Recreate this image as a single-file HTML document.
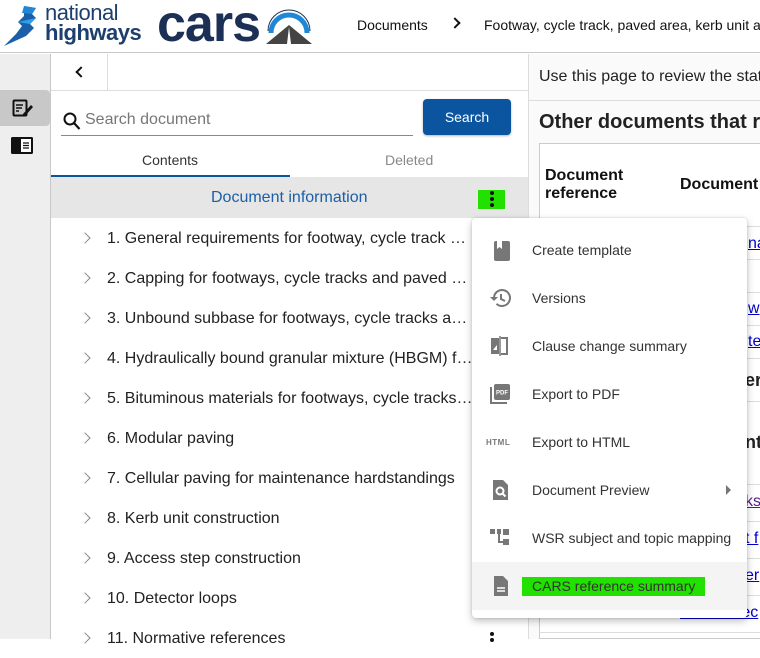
<!DOCTYPE html>
<html><head><style>
*{box-sizing:border-box;margin:0;padding:0}
body{width:760px;height:639px;overflow:hidden;font-family:"Liberation Sans",Arial,sans-serif;background:#fff;position:relative;color:#222}
.abs{position:absolute}
.row{position:absolute;left:51px;width:477px;height:40px;font-size:16px;color:#222;white-space:nowrap;overflow:hidden}
.row .chev{position:absolute;left:30px;top:16px;width:8px;height:8px;border-right:1.5px solid #888;border-top:1.5px solid #888;transform:rotate(45deg)}
.row span{position:absolute;left:56px;top:12px;width:366px;overflow:hidden;text-overflow:ellipsis}
.mi{position:absolute;left:0;width:275px;height:48px;font-size:14px;color:#333}
.mi .t{position:absolute;left:60px;top:16px;white-space:nowrap}
.mi svg{position:absolute;left:16px;top:12px}
a{color:#00c;text-decoration:underline}
</style></head><body>
<div class="abs" style="left:0;top:0;width:760px;height:53px;border-bottom:1px solid #c8c8c8;background:#fff"></div>
<svg class="abs" style="left:2px;top:4px" width="40" height="42" viewBox="0 0 40 42">
<path d="M22 2 L34 4 L30 10 L34 14 L28 20 L32 24 L24 32 L2 42 L14 30 L20 22 L16 18 L22 12 Z" fill="#1a5fa8"/>
<path d="M22 2 L34 4 L30 10 L20 9 Z" fill="#1e88d6"/>
<path d="M16 18 L34 14 L28 20 Z" fill="#2ea0e8"/>
</svg>
<div class="abs" style="left:45px;top:3px;font-size:22px;line-height:20px;color:#1c3f6e;letter-spacing:-0.5px">national</div>
<div class="abs" style="left:45px;top:22px;font-size:22px;line-height:22px;font-weight:bold;color:#1c3f6e;letter-spacing:-0.5px">highways</div>
<div class="abs" style="left:157px;top:-4px;font-size:52px;font-weight:bold;color:#1c3056;letter-spacing:-1px;line-height:56px">cars</div>
<svg class="abs" style="left:266px;top:5px" width="46" height="40" viewBox="0 0 46 40">
<path d="M5 28 A18 18 0 0 1 41 28" fill="none" stroke="#1e88d6" stroke-width="5"/>
<path d="M2 26 A21 21 0 0 1 44 26" fill="none" stroke="#1c3056" stroke-width="1"/>
<path d="M23 20 L46 39 L0 39 Z" fill="#444"/>
<path d="M23 22 L25 39 L21 39 Z" fill="#fff"/>
</svg>
<div class="abs" style="left:357px;top:17px;font-size:14px;color:#111">Documents</div>
<div class="abs" style="left:451px;top:19px;width:8px;height:8px;border-right:2px solid #111;border-top:2px solid #111;transform:rotate(45deg)"></div>
<div class="abs" style="left:484px;top:17px;font-size:14px;color:#111;white-space:nowrap">Footway, cycle track, paved area, kerb unit a</div>
<div class="abs" style="left:0;top:54px;width:51px;height:585px;background:#eee;border-right:1px solid #c8c8c8"></div>
<div class="abs" style="left:0;top:90px;width:50px;height:36px;background:#c8c8c8;border-radius:0 4px 4px 0"></div>
<svg class="abs" style="left:12px;top:99px" width="22" height="18" viewBox="0 0 22 18"><rect x="1.5" y="1.5" width="13" height="15" rx="1" fill="none" stroke="#111" stroke-width="2"/><path d="M4 6h7M4 9h6M4 12h3" stroke="#111" stroke-width="1.6"/><path d="M11 15 L19 6 L21 8 L13 17 L10 17 Z" fill="#111"/></svg>
<svg class="abs" style="left:11px;top:137px" width="22" height="17" viewBox="0 0 22 17"><rect x="0" y="0" width="22" height="17" rx="1.5" fill="#111"/><rect x="10" y="2" width="10" height="13" fill="#fff"/><path d="M12 6h6M12 8.5h6M12 11h6" stroke="#111" stroke-width="1.2"/></svg>
<div class="abs" style="left:51px;top:90px;width:477px;height:1px;background:#ddd"></div>
<div class="abs" style="left:107px;top:54px;width:1px;height:36px;background:#ddd"></div>
<div class="abs" style="left:77px;top:68px;width:8px;height:8px;border-left:2px solid #111;border-bottom:2px solid #111;transform:rotate(45deg)"></div>
<svg class="abs" style="left:63px;top:112px" width="18" height="20" viewBox="0 0 18 20"><circle cx="7" cy="7" r="5.5" fill="none" stroke="#111" stroke-width="2"/><path d="M11 11 L16.5 17" stroke="#111" stroke-width="2.2"/></svg>
<div class="abs" style="left:85px;top:111px;font-size:16px;color:#777">Search document</div>
<div class="abs" style="left:61px;top:135px;width:352px;height:1px;background:#888"></div>
<div class="abs" style="left:423px;top:99px;width:88px;height:36px;background:#0b55a0;border-radius:4px;color:#fff;font-size:14px;text-align:center;line-height:36px;box-shadow:0 1px 2px rgba(0,0,0,.3)">Search</div>
<div class="abs" style="left:142px;top:152px;font-size:14px;color:#333">Contents</div>
<div class="abs" style="left:385px;top:152px;font-size:14px;color:#888">Deleted</div>
<div class="abs" style="left:51px;top:175px;width:239px;height:2px;background:#0b55a0"></div>
<div class="abs" style="left:51px;top:177px;width:477px;height:41px;background:#e6e6e6"></div>
<div class="abs" style="left:211px;top:189px;font-size:16px;color:#1a5fa8">Document information</div>
<div class="abs" style="left:478px;top:190px;width:27px;height:19px;background:#22e000"></div>
<div class="abs" style="left:490px;top:191px;width:4px;height:4px;border-radius:2px;background:#111;box-shadow:0 6px 0 #111,0 12px 0 #111"></div>
<div class="row" style="top:218px"><i class="chev"></i><span>1. General requirements for footway, cycle track and paved areas</span></div>
<div class="row" style="top:258px"><i class="chev"></i><span>2. Capping for footways, cycle tracks and paved areas</span></div>
<div class="row" style="top:298px"><i class="chev"></i><span>3. Unbound subbase for footways, cycle tracks and paved</span></div>
<div class="row" style="top:338px"><i class="chev"></i><span>4. Hydraulically bound granular mixture (HBGM) for footways</span></div>
<div class="row" style="top:378px"><i class="chev"></i><span>5. Bituminous materials for footways, cycle tracks and</span></div>
<div class="row" style="top:418px"><i class="chev"></i><span>6. Modular paving</span></div>
<div class="row" style="top:458px"><i class="chev"></i><span>7. Cellular paving for maintenance hardstandings</span></div>
<div class="row" style="top:498px"><i class="chev"></i><span>8. Kerb unit construction</span></div>
<div class="row" style="top:538px"><i class="chev"></i><span>9. Access step construction</span></div>
<div class="row" style="top:578px"><i class="chev"></i><span>10. Detector loops</span></div>
<div class="row" style="top:618px"><i class="chev"></i><span>11. Normative references</span></div>
<div class="abs" style="left:490px;top:632px;width:4px;height:4px;border-radius:2px;background:#111;box-shadow:0 6px 0 #111"></div>
<div class="abs" style="left:528px;top:54px;width:1px;height:585px;background:#ddd"></div>
<div class="abs" style="left:529px;top:54px;width:231px;height:585px;background:#fafafa"></div>
<div class="abs" style="left:529px;top:100px;width:231px;height:1px;background:#ddd"></div>
<div class="abs" style="left:539px;top:68px;font-size:16px;color:#222;white-space:nowrap">Use this page to review the stat</div>
<div class="abs" style="left:539px;top:111px;font-size:20px;font-weight:bold;color:#222;white-space:nowrap">Other documents that re</div>
<div class="abs" style="left:539px;top:143px;width:221px;height:496px;border:1px solid #ccc;border-right:none;background:#fff"></div>
<div class="abs" style="left:545px;top:167px;font-size:16px;font-weight:bold;line-height:18px;color:#111">Document<br>reference</div>
<div class="abs" style="left:680px;top:176px;font-size:16px;font-weight:bold;color:#111;white-space:nowrap">Document</div>
<div class="abs" style="left:540px;top:226px;width:220px;height:1px;background:#ddd"></div>
<div class="abs" style="left:748px;top:235px;font-size:16px"><a>na</a></div>
<div class="abs" style="left:540px;top:259px;width:220px;height:1px;background:#ddd"></div>
<div class="abs" style="left:540px;top:292px;width:220px;height:1px;background:#ddd"></div>
<div class="abs" style="left:748px;top:300px;font-size:16px"><a>w</a></div>
<div class="abs" style="left:540px;top:325px;width:220px;height:1px;background:#ddd"></div>
<div class="abs" style="left:748px;top:333px;font-size:16px"><a>te</a></div>
<div class="abs" style="left:540px;top:358px;width:220px;height:1px;background:#ddd"></div>
<div class="abs" style="left:745px;top:370px;font-size:18px;font-weight:bold">er</div>
<div class="abs" style="left:540px;top:401px;width:220px;height:1px;background:#ddd"></div>
<div class="abs" style="left:745px;top:432px;font-size:18px;font-weight:bold">nt</div>
<div class="abs" style="left:540px;top:484px;width:220px;height:1px;background:#ddd"></div>
<div class="abs" style="left:745px;top:493px;font-size:16px"><a style="color:#551a8b">ks</a></div>
<div class="abs" style="left:540px;top:521px;width:220px;height:1px;background:#ddd"></div>
<div class="abs" style="left:745px;top:530px;font-size:16px"><a>t f</a></div>
<div class="abs" style="left:540px;top:558px;width:220px;height:1px;background:#ddd"></div>
<div class="abs" style="left:745px;top:567px;font-size:16px"><a>er</a></div>
<div class="abs" style="left:540px;top:595px;width:220px;height:1px;background:#ddd"></div>
<div class="abs" style="left:680px;top:604px;font-size:16px"><a>General ec</a></div>
<div class="abs" style="left:545px;top:604px;font-size:16px">DC 101</div>
<div class="abs" style="left:540px;top:632px;width:220px;height:1px;background:#ddd"></div>
<div class="abs" style="left:472px;top:218px;width:275px;height:400px;background:#fff;border-radius:4px;box-shadow:0 3px 8px rgba(0,0,0,.25),0 0 2px rgba(0,0,0,.15)">
<div class="mi" style="top:8px"><svg width="24" height="24" viewBox="0 0 24 24"><rect x="6" y="3" width="16" height="20" rx="2" fill="#777"/><path d="M9 3v8l2.5-2 2.5 2V3z" fill="#fff"/></svg><span class="t">Create template</span></div>
<div class="mi" style="top:56px"><svg width="24" height="24" viewBox="0 0 24 24"><path d="M6 12a8 8 0 1 1 2.5 5.8" fill="none" stroke="#777" stroke-width="2"/><path d="M2 11h8l-4 4z" fill="#777"/><path d="M13 8v5l4 2" fill="none" stroke="#777" stroke-width="2"/></svg><span class="t">Versions</span></div>
<div class="mi" style="top:104px"><svg width="24" height="24" viewBox="0 0 24 24"><path d="M3 4h8v16H3z" fill="#777"/><path d="M13 4h6v16h-6" fill="none" stroke="#777" stroke-width="2"/><path d="M12 2v20" stroke="#777" stroke-width="1.5"/><path d="M5 16l4-5v5z" fill="#fff"/></svg><span class="t">Clause change summary</span></div>
<div class="mi" style="top:152px"><svg width="24" height="24" viewBox="0 0 24 24"><rect x="6" y="2" width="16" height="16" rx="2" fill="#777"/><path d="M3 5v16h16" fill="none" stroke="#777" stroke-width="2"/><text x="14" y="12.5" font-size="6" font-weight="bold" fill="#fff" text-anchor="middle" font-family="Liberation Sans">PDF</text></svg><span class="t">Export to PDF</span></div>
<div class="mi" style="top:200px"><svg width="28" height="24" viewBox="0 0 28 24" style="left:14px"><text x="0" y="15" font-size="8" font-weight="bold" fill="#777" font-family="Liberation Sans" letter-spacing="0.5">HTML</text></svg><span class="t">Export to HTML</span></div>
<div class="mi" style="top:248px"><svg width="24" height="24" viewBox="0 0 24 24"><path d="M5 2h10l5 5v15H5z" fill="#777"/><circle cx="12" cy="13" r="3.5" fill="none" stroke="#fff" stroke-width="2"/><path d="M14.5 15.5l3 3" stroke="#fff" stroke-width="2"/></svg><span class="t">Document Preview</span><div style="position:absolute;left:254px;top:19px;border-left:5px solid #777;border-top:5px solid transparent;border-bottom:5px solid transparent"></div></div>
<div class="mi" style="top:296px"><svg width="24" height="24" viewBox="0 0 24 24"><path d="M2 3h5v5H2zM9 3h4v5H9zM15 3h6v6h-6zM15 13h6v6h-6z" fill="#777"/><path d="M11 8v8h4" fill="none" stroke="#777" stroke-width="2"/></svg><span class="t">WSR subject and topic mapping</span></div>
<div class="mi" style="top:344px;background:#f4f4f4"><svg width="24" height="24" viewBox="0 0 24 24"><path d="M6 2h9l5 5v15H6z" fill="#777"/><path d="M9 14h8M9 17h8" stroke="#fff" stroke-width="1.6"/></svg><div style="position:absolute;left:50px;top:15px;width:183px;height:19px;background:#22e000"></div><span class="t">CARS reference summary</span></div>
</div>
</body></html>
